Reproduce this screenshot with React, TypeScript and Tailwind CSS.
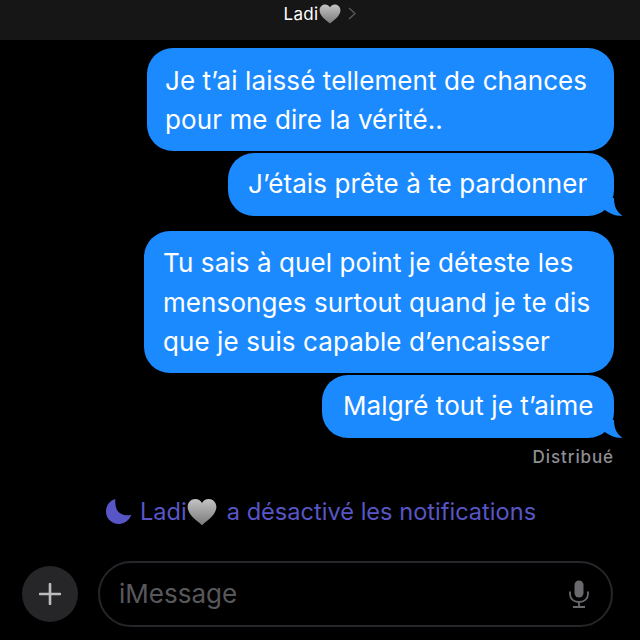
const font = { fontFamily: 'Inter, "Liberation Sans", sans-serif' };

function Heart({ className }: { className: string }) {
  return (
    <svg viewBox="0 0 24 22" className={className}>
      <defs>
        <linearGradient id="heartGrad" x1="0" y1="0" x2="0" y2="1">
          <stop offset="0" stopColor="#c4c4c4" />
          <stop offset="1" stopColor="#7a7a7a" />
        </linearGradient>
      </defs>
      <path
        d="M12 21.5C9 18.6 0.5 13.5 0.5 6.9 0.5 3.2 3.3 0.5 6.6 0.5c2.4 0 4.3 1.2 5.4 3.2C13.1 1.7 15 0.5 17.4 0.5c3.3 0 6.1 2.7 6.1 6.4 0 6.6-8.5 11.7-11.5 14.6z"
        fill="url(#heartGrad)"
      />
    </svg>
  );
}

function Tail() {
  return (
    <svg viewBox="0 0 20 18" className="absolute right-[-9px] bottom-0 h-[18px] w-[20px]">
      <path d="M0 0 L11 0 C11 8 13.5 14 19.5 17.6 C14 18.4 8 16.5 1 11.5 Z" fill="#1c8aff" />
    </svg>
  );
}

function Bubble({ cls, tail, lines }: { cls: string; tail?: boolean; lines: string[] }) {
  return (
    <div className={`relative h-fit rounded-[26px] bg-[#1c8aff] text-[26px] leading-[39.4px] tracking-[0.09px] whitespace-nowrap text-white ${cls}`}>
      {lines.map((l) => (
        <div key={l}>{l}</div>
      ))}
      {tail && <Tail />}
    </div>
  );
}

export default function App() {
  return (
    <div className="flex h-[640px] w-[640px] flex-col overflow-hidden bg-black" style={font}>
      <header className="flex h-10 shrink-0 items-center justify-center bg-[#161616] pb-[13px]">
        <span className="text-[17px] leading-5 tracking-[0.3px] text-white">Ladi</span>
        <Heart className="ml-[1px] h-[20px] w-[22px]" />
        <svg viewBox="0 0 8 13" className="ml-[7px] h-[13px] w-[8px]">
          <path d="M1 1l6 5.5-6 5.5" fill="none" stroke="#5a5a5a" strokeWidth="1.4" />
        </svg>
      </header>

      <main className="flex flex-col items-end pt-2 pr-[26px]">
        <div className="flex flex-col items-end gap-[2px]">
          <Bubble cls="w-[467px] pt-[13px] pb-[11px] pl-[18px]" lines={["Je t’ai laissé tellement de chances", "pour me dire la vérité.."]} />
          <Bubble cls="w-[386px] pt-[11px] pb-[13px] pl-[20px]" tail lines={["J’étais prête à te pardonner"]} />
        </div>
        <div className="mt-[15px] flex flex-col items-end gap-[2px]">
          <Bubble cls="w-[470px] pt-[12px] pb-[12px] pl-[19px]" lines={["Tu sais à quel point je déteste les", "mensonges surtout quand je te dis", "que je suis capable d’encaisser"]} />
          <Bubble cls="w-[292px] pt-[11px] pb-[12px] pl-[21px]" tail lines={["Malgré tout je t’aime"]} />
        </div>
        <div className="mt-[9px] text-[17px] leading-5 font-medium tracking-[0.9px] text-[#8e8e93]">Distribué</div>
      </main>

      <div className="mt-[25px] flex h-10 items-center pl-[106px] text-[23.6px] leading-8 text-[#5856c6]">
        <svg viewBox="0 0 24 24" className="mr-[8px] h-[26px] w-[26px]">
          <path d="M8.5 0C3.5 1.5 0 6 0 11.5 0 18 5 23 12 23c5 0 9-3 11.5-8.5C16 16.5 10 12.5 9 7 8.6 4.5 8.4 2.5 8.5 0Z" fill="#5856c6" />
        </svg>
        <span>Ladi</span>
        <Heart className="h-[28px] w-[30px]" />
        <span className="ml-[10px]">a désactivé les notifications</span>
      </div>

      <div className="mt-[29px] flex items-center pr-[27px] pl-[22px]">
        <div className="flex h-[56px] w-[56px] shrink-0 items-center justify-center rounded-full bg-[#262628]">
          <svg viewBox="0 0 22 22" className="h-[22px] w-[22px]">
            <path d="M11 1v20M1 11h20" stroke="#bcbcbc" strokeWidth="2.6" strokeLinecap="round" />
          </svg>
        </div>
        <div className="ml-[20px] flex h-[66px] flex-1 items-center justify-between rounded-[33px] border-2 border-[#26262a] pr-[22px] pl-[19px]">
          <span className="text-[26px] text-[#58585c]">iMessage</span>
          <svg viewBox="0 0 20 28" className="h-[28px] w-[20px]">
            <rect x="5.5" y="0.5" width="9" height="17" rx="4.5" fill="#6a6a6e" />
            <path d="M1 11.5v2.5c0 5 4 8 9 8s9-3 9-8v-2.5M10 22v5M4 27h12" fill="none" stroke="#6a6a6e" strokeWidth="1.8" />
          </svg>
        </div>
      </div>
    </div>
  );
}
